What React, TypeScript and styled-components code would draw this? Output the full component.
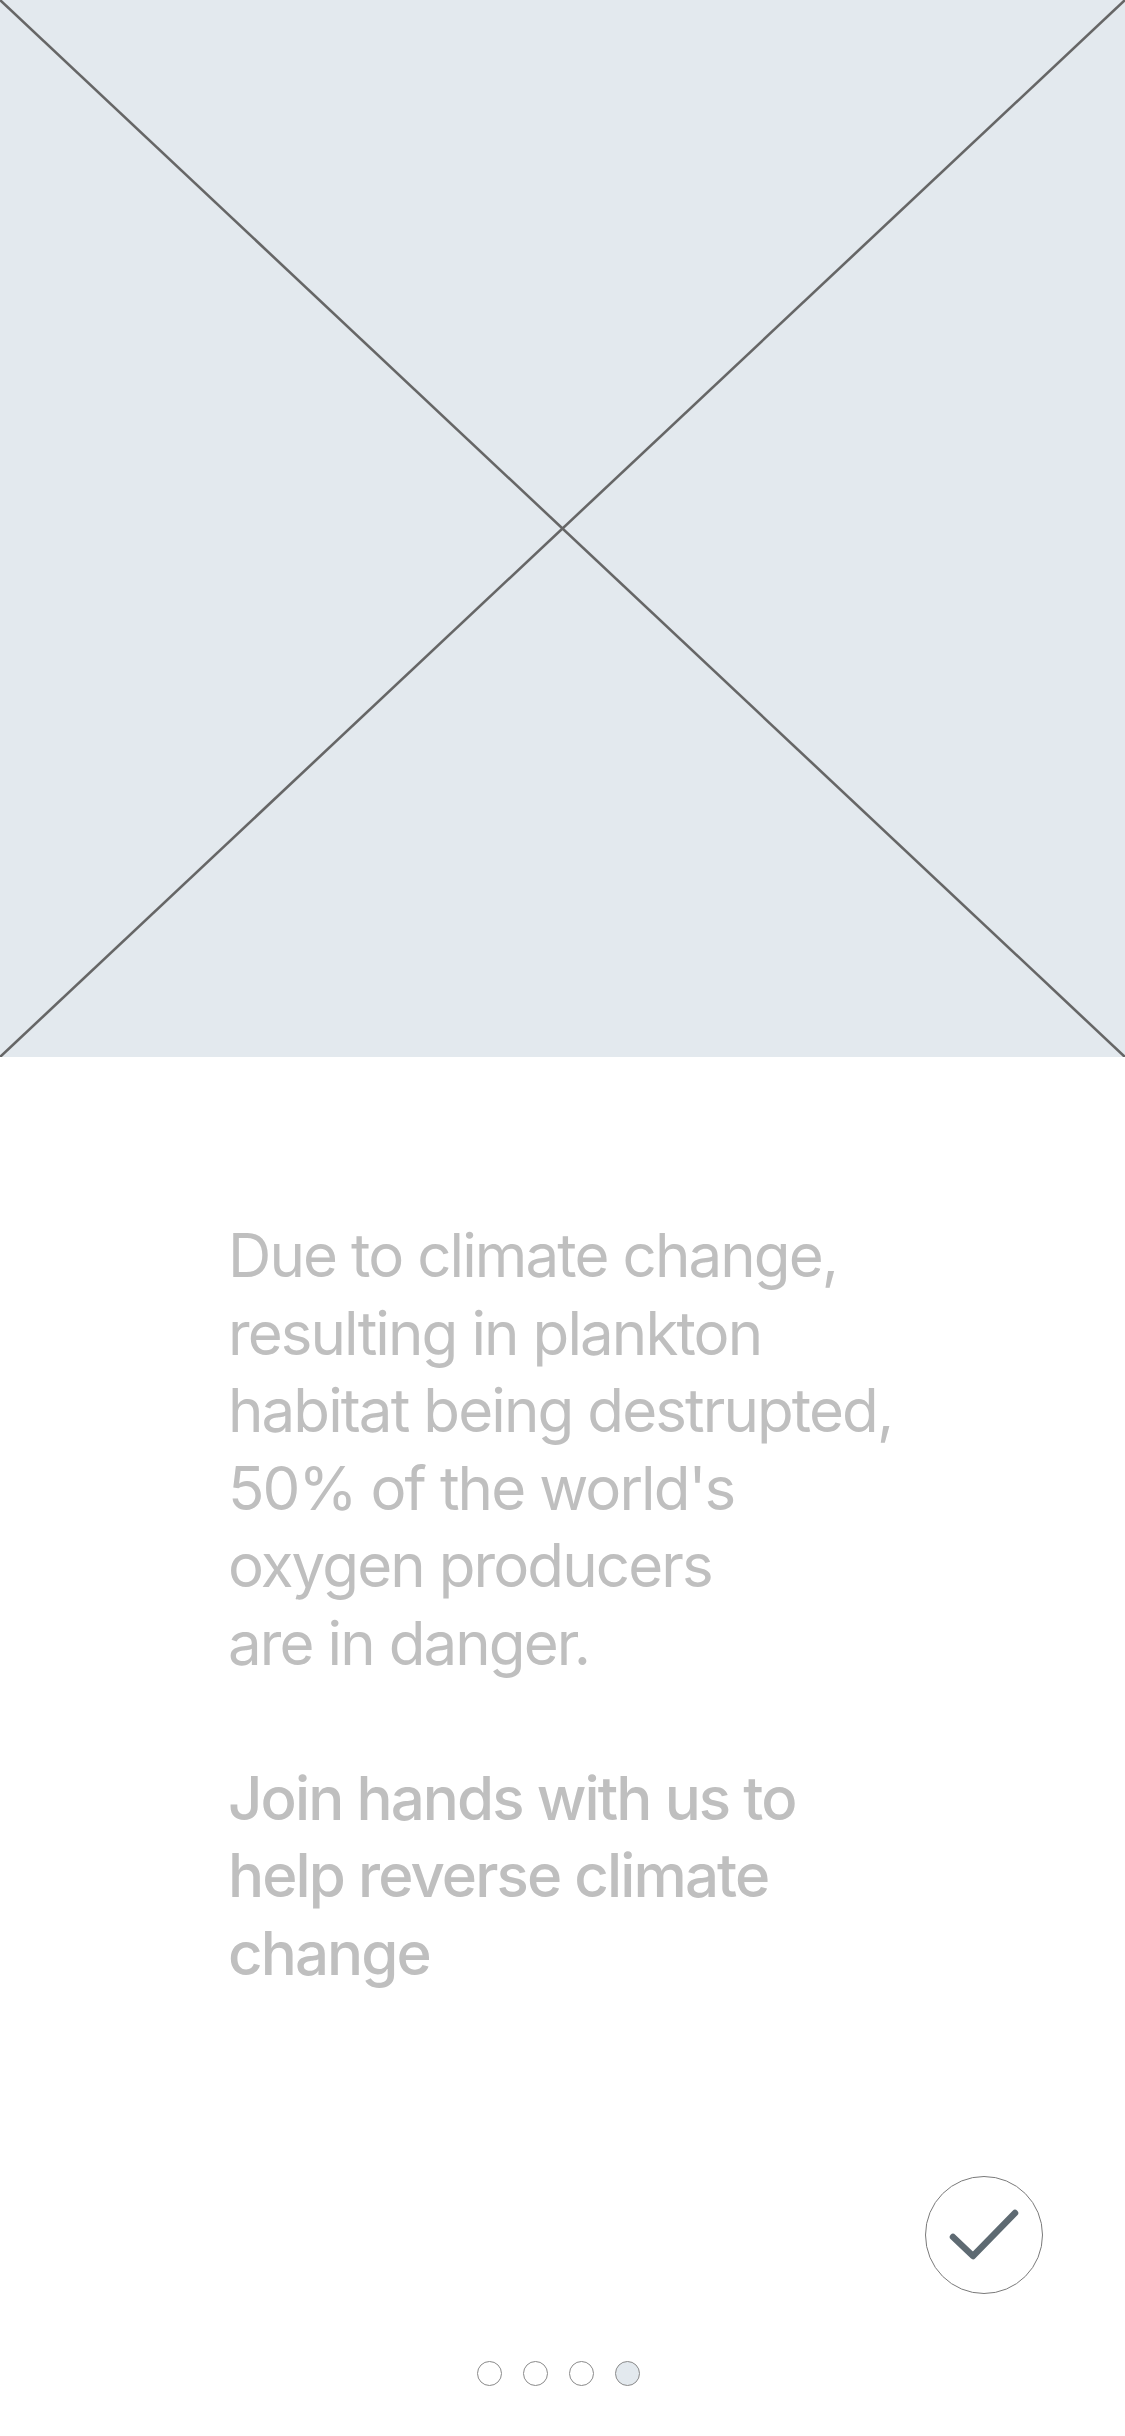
import React from "react";
import styled, { createGlobalStyle } from "styled-components";

const Global = createGlobalStyle`
  html, body { margin: 0; padding: 0; background: #ffffff; }
  body { width: 1125px; font-family: Inter, "Noto Sans", sans-serif; }
`;

const Screen = styled.div`
  width: 1125px;
  min-height: 2436px;
  display: flex;
  flex-direction: column;
  background: #ffffff;
`;

const HeroPlaceholder = styled.div`
  width: 100%;
  height: 1057px;
  background: #e3e9ee;
  display: block;
  svg { display: block; width: 100%; height: 100%; }
`;

const Copy = styled.div`
  padding: 160px 0 0 228px;
  display: flex;
  flex-direction: column;
  gap: 77.5px;
`;

const Paragraph = styled.p<{ $strong?: boolean }>`
  margin: 0;
  font-family: Inter, "Noto Sans", sans-serif;
  font-size: 60px;
  line-height: 77.5px;
  letter-spacing: -1.9px;
  color: #bfbfbf;
  font-weight: ${(p) => (p.$strong ? 500 : 400)};
`;

const ActionRow = styled.div`
  display: flex;
  justify-content: flex-end;
  padding: 184px 82px 0 0;
`;

const DoneButton = styled.button`
  width: 118px;
  height: 118px;
  border-radius: 50%;
  border: 1.5px solid #7a7a7a;
  background: #ffffff;
  display: flex;
  align-items: center;
  justify-content: center;
  padding: 0;
  cursor: pointer;
`;

const Dots = styled.div`
  display: flex;
  justify-content: center;
  gap: 21px;
  padding-top: 67px;
  padding-right: 8px;
`;

const Dot = styled.span<{ $active?: boolean }>`
  width: 25px;
  height: 25px;
  border-radius: 50%;
  box-sizing: border-box;
  border: 1.5px solid #8a8a8a;
  background: ${(p) => (p.$active ? "#e3e9ee" : "#ffffff")};
`;

export default function App() {
  return (
    <Screen>
      <Global />
      <HeroPlaceholder>
        <svg viewBox="0 0 1125 1057" preserveAspectRatio="none">
          <line x1="0" y1="0" x2="1125" y2="1057" stroke="#666666" strokeWidth="2.6" />
          <line x1="1125" y1="0" x2="0" y2="1057" stroke="#666666" strokeWidth="2.6" />
        </svg>
      </HeroPlaceholder>
      <Copy>
        <Paragraph>
          Due to climate change,
          <br />
          resulting in plankton
          <br />
          habitat being destrupted,
          <br />
          50% of the world's
          <br />
          oxygen producers
          <br />
          are in danger.
        </Paragraph>
        <Paragraph $strong>
          Join hands with us to
          <br />
          help reverse climate
          <br />
          change
        </Paragraph>
      </Copy>
      <ActionRow>
        <DoneButton aria-label="Done">
          <svg width="100" height="100" viewBox="0 0 100 100">
            <polyline
              points="19,52 39,71 81,28"
              fill="none"
              stroke="#5e6a72"
              strokeWidth="6.5"
              strokeLinecap="round"
              strokeLinejoin="round"
            />
          </svg>
        </DoneButton>
      </ActionRow>
      <Dots>
        <Dot />
        <Dot />
        <Dot />
        <Dot $active />
      </Dots>
    </Screen>
  );
}
